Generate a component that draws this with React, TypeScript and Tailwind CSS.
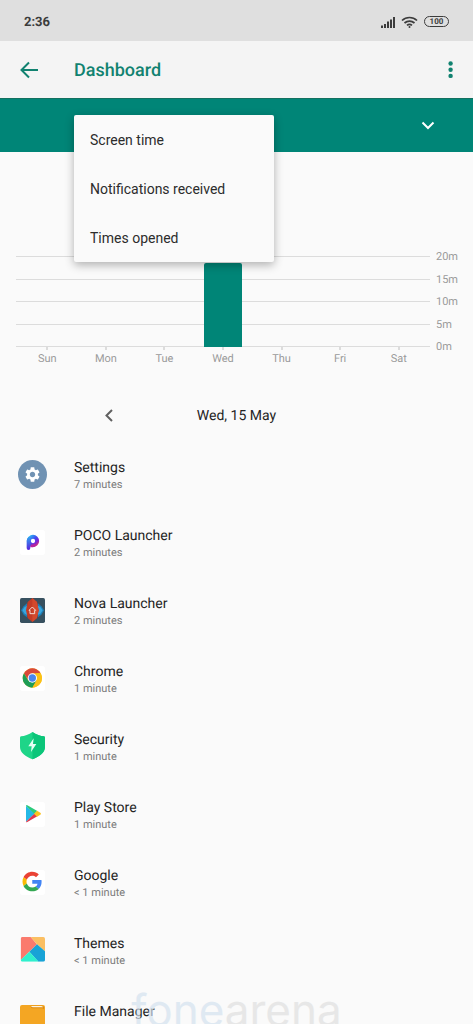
import React from 'react';

interface AppUsage {
  name: string;
  time: string;
  icon: React.ReactNode;
}

const MENU_ITEMS = ['Screen time', 'Notifications received', 'Times opened'];

const Y_LABELS = ['20m', '15m', '10m', '5m', '0m'];

const MAX_MINUTES = 20;

const DAYS = [
  { label: 'Sun', minutes: 0 },
  { label: 'Mon', minutes: 0 },
  { label: 'Tue', minutes: 0 },
  { label: 'Wed', minutes: 18.5 },
  { label: 'Thu', minutes: 0 },
  { label: 'Fri', minutes: 0 },
  { label: 'Sat', minutes: 0 }
];

// All app icons share one 87 unit canvas
const AppIcon: React.FC<{ children: React.ReactNode }> = ({ children }) => (
  <svg viewBox="0 0 87 87" className="size-[29px]" aria-hidden="true">
    {children}
  </svg>
);

const SettingsIcon = () => (
  <AppIcon>
    <circle cx="43.5" cy="43.5" r="43.5" fill="#7092b3" />
    <path
      transform="translate(16.5 16.5) scale(2.25)"
      fill="#fff"
      d="M19.14 12.94c.04-.3.06-.61.06-.94 0-.32-.02-.64-.07-.94l2.03-1.58c.18-.14.23-.41.12-.61l-1.92-3.32c-.12-.22-.37-.29-.59-.22l-2.39.96c-.5-.38-1.03-.7-1.62-.94l-.36-2.54c-.04-.24-.24-.41-.48-.41h-3.84c-.24 0-.43.17-.47.41l-.36 2.54c-.59.24-1.13.57-1.62.94l-2.39-.96c-.22-.08-.47 0-.59.22L2.74 8.87c-.12.21-.08.47.12.61l2.03 1.58c-.05.3-.09.63-.09.94s.02.64.07.94l-2.03 1.58c-.18.14-.23.41-.12.61l1.92 3.32c.12.22.37.29.59.22l2.39-.96c.5.38 1.03.7 1.62.94l.36 2.54c.05.24.24.41.48.41h3.84c.24 0 .44-.17.47-.41l.36-2.54c.59-.24 1.13-.56 1.62-.94l2.39.96c.22.08.47 0 .59-.22l1.92-3.32c.12-.22.07-.47-.12-.61l-2.01-1.58zM12 15.6c-1.98 0-3.6-1.62-3.6-3.6s1.62-3.6 3.6-3.6 3.6 1.62 3.6 3.6-1.62 3.6-3.6 3.6z"
    />
  </AppIcon>
);

const PocoIcon = () => (
  <AppIcon>
    <defs>
      <linearGradient id="poco-bowl" x1="0" y1="0" x2="1" y2="1">
        <stop offset="0" stopColor="#2fb4f2" />
        <stop offset="0.45" stopColor="#3f4df0" />
        <stop offset="0.75" stopColor="#7a24d8" />
        <stop offset="1" stopColor="#d0307c" />
      </linearGradient>
      <linearGradient id="poco-stem" x1="0" y1="0" x2="0" y2="1">
        <stop offset="0" stopColor="#2fa5f2" />
        <stop offset="1" stopColor="#5a22dc" />
      </linearGradient>
    </defs>
    <rect x="6" y="6" width="75" height="75" rx="8" fill="#fff" />
    <circle cx="45" cy="39" r="12.500" fill="none" stroke="url(#poco-bowl)" strokeWidth="12" />
    <path d="M26 38q1-8 6-12l5 10v24q0 6-5.500 6T26 60z" fill="url(#poco-stem)" />
    <path d="M38 53q8 3 15-4" fill="none" stroke="#b8249c" strokeWidth="8" />
  </AppIcon>
);

const NovaIcon = () => (
  <AppIcon>
    <rect x="6" y="6" width="75" height="75" rx="5" fill="#37505f" />
    <path d="M9 43l8-12 10-9v42l-10-8z" fill="#1c7fb8" />
    <path d="M78 43l-8-12-10-9v42l10-8z" fill="#1c7fb8" />
    <path d="M13 43l7-10 8-4v28l-8-4zM74 43l-7-10-8-4v28l8-4z" fill="#3ba6dc" />
    <path d="M43 6l14 12 5 25-5 23-14 12-14-12-5-23 5-25z" fill="#c23c26" />
    <path d="M43 6l14 12 5 25-5 23-14 12z" fill="#d3492c" />
    <path d="M33 43l10-10 10 10h-3v10H36V43z" fill="none" stroke="#f4dcd4" strokeWidth="3" strokeLinejoin="round" />
  </AppIcon>
);

const ChromeIcon = () => (
  <AppIcon>
    <rect x="6" y="6" width="75" height="75" rx="8" fill="#fff" />
    <circle cx="43" cy="42" r="29" fill="#fbc116" />
    <path d="M17.9 27.5A29 29 0 0 1 68.1 27.5H43L31.4 48.7z" fill="#d9493a" />
    <path d="M17.9 27.5A29 29 0 0 0 43 71L55.6 49.3 43 42 31 50z" fill="#1f9d57" />
    <path d="M68.1 27.5A29 29 0 0 1 43 71L55.6 49.3 55 27.5z" fill="#fbc116" />
    <circle cx="43" cy="42" r="14" fill="#fff" />
    <circle cx="43" cy="42" r="11" fill="#4a86ee" />
  </AppIcon>
);

const SecurityIcon = () => (
  <AppIcon>
    <path d="M43.5 0C54 8 68 12 78 13q3 1 3 4v28c0 17-17 29-37.500 37C23 74 6 62 6 45V17q0-3 3-4C19 12 33 8 43.500 0z" fill="#1ed588" />
    <path d="M43.500 0C54 8 68 12 78 13q3 1 3 4v28c0 17-17 29-37.500 37z" fill="#0bc579" />
    <path d="M47 19L31 43h10l-2 17 16-24H45z" fill="#e6fff4" />
  </AppIcon>
);

const PlayIcon = () => (
  <AppIcon>
    <rect x="6" y="6" width="75" height="75" rx="8" fill="#fff" />
    <path d="M24 17v48l26-24z" fill="#26b9e6" />
    <path d="M24 17q1-3 4-1l30 17-9 9z" fill="#2ccb7c" />
    <path d="M24 65q1 3 4 1l30-17-9-8z" fill="#e0394f" />
    <path d="M57 32l10 6q4 3 0 6l-10 6-9-9z" fill="#fcc31e" />
  </AppIcon>
);

const GoogleIcon = () => (
  <AppIcon>
    <rect x="6" y="6" width="75" height="75" rx="8" fill="#fff" />
    <g transform="translate(13.500 11.500) scale(1.22)">
      <path fill="#ea4335" d="M24 9.500c3.540 0 6.710 1.220 9.210 3.600l6.850-6.850C35.900 2.380 30.470 0 24 0 14.620 0 6.510 5.380 2.560 13.220l7.980 6.190C12.430 13.720 17.740 9.500 24 9.500z" />
      <path fill="#4285f4" d="M46.980 24.550c0-1.570-.15-3.090-.38-4.550H24v9.020h12.940c-.58 2.960-2.260 5.480-4.780 7.180l7.730 6c4.510-4.180 7.090-10.360 7.090-17.650z" />
      <path fill="#fbbc05" d="M10.530 28.590c-.48-1.450-.76-2.990-.76-4.590s.27-3.140.76-4.590l-7.980-6.190C.92 16.460 0 20.120 0 24c0 3.880.92 7.540 2.560 10.780l7.970-6.190z" />
      <path fill="#34a853" d="M24 48c6.480 0 11.930-2.130 15.890-5.810l-7.730-6c-2.150 1.450-4.920 2.300-8.160 2.300-6.260 0-11.570-4.220-13.470-9.910l-7.980 6.190C6.510 42.620 14.620 48 24 48z" />
    </g>
  </AppIcon>
);

const ThemesIcon = () => (
  <AppIcon>
    <defs>
      <clipPath id="themes-tile">
        <rect x="8" y="3" width="73" height="74" rx="5" />
      </clipPath>
    </defs>
    <g clipPath="url(#themes-tile)">
      <path d="M8 3h30l19 22-49 48z" fill="#fa7a6d" />
      <path d="M38 3h43v43L57 25z" fill="#fbbf62" />
      <path d="M57 25l24 21v31H61L34 47z" fill="#18a3d6" />
      <path d="M34 47l28 30H8v-5z" fill="#2ff0cd" />
    </g>
  </AppIcon>
);

const FilesIcon = () => (
  <AppIcon>
    <rect x="6" y="3" width="75" height="76" rx="6" fill="#f4a623" />
    <path d="M38 5h34q6 0 6 6v5q-2-3-6-3H44q-5 0-6-8z" fill="#d98a12" />
    <path d="M39 6h30q5 0 6 4H45q-4 0-6-4z" fill="#fff3dc" />
  </AppIcon>
);

const APPS: AppUsage[] = [
  { name: 'Settings', time: '7 minutes', icon: <SettingsIcon /> },
  { name: 'POCO Launcher', time: '2 minutes', icon: <PocoIcon /> },
  { name: 'Nova Launcher', time: '2 minutes', icon: <NovaIcon /> },
  { name: 'Chrome', time: '1 minute', icon: <ChromeIcon /> },
  { name: 'Security', time: '1 minute', icon: <SecurityIcon /> },
  { name: 'Play Store', time: '1 minute', icon: <PlayIcon /> },
  { name: 'Google', time: '< 1 minute', icon: <GoogleIcon /> },
  { name: 'Themes', time: '< 1 minute', icon: <ThemesIcon /> },
  { name: 'File Manager', time: '< 1 minute', icon: <FilesIcon /> }
];

const StatusBar = () => (
  <div className="flex h-[41px] items-center justify-between bg-[#dfdfdf] pt-1 pr-6 pl-6 text-[#3c3c3c]">
    <span className="text-[13px] font-bold">2:36</span>
    <div className="flex items-center gap-1 pb-[2px]">
      <svg viewBox="0 0 17 12" className="h-3 w-[17px]" fill="currentColor" aria-hidden="true">
        <path d="M1 9.500h2V12H1zM4 8h2v4H4zM7 5.500h2V12H7zM10 3.500h2V12h-2zM13 1h2v11h-2z" />
      </svg>
      <svg viewBox="0 0 17 12" className="h-3 w-[17px]" fill="none" stroke="currentColor" strokeWidth="1.700" aria-hidden="true">
        <path d="M1 4.500c4.300-4 10.700-4 15 0M3.500 7c2.900-2.600 7.100-2.600 10 0M6 9.400c1.500-1.300 3.500-1.300 5 0" />
        <circle cx="8.500" cy="11" r="1" fill="currentColor" stroke="none" />
      </svg>
      <span className="ml-[2px] flex h-[11px] w-[25px] items-center justify-center rounded-full border border-[#3c3c3c] text-[8px] leading-none font-bold">
        100
      </span>
    </div>
  </div>
);

const AppBar = () => (
  <header className="flex h-[57px] items-center bg-[#f4f4f4] text-[#118270]">
    <button type="button" aria-label="Back" className="ml-[18px] flex w-14 items-center">
      <svg viewBox="0 0 24 24" className="size-6" fill="none" stroke="currentColor" strokeWidth="2" aria-hidden="true">
        <path d="M20 12H4M11 4.500L3.500 12l7.500 7.500" />
      </svg>
    </button>
    <h1 className="flex-1 pt-[2px] text-[18px] font-medium">Dashboard</h1>
    <button type="button" aria-label="More options" className="mr-[10px] flex size-6 items-center justify-center">
      <svg viewBox="0 0 24 24" className="size-6" fill="currentColor" aria-hidden="true">
        <circle cx="11.600" cy="5.500" r="2.200" />
        <circle cx="11.600" cy="11.700" r="2.200" />
        <circle cx="11.600" cy="17.900" r="2.200" />
      </svg>
    </button>
  </header>
);

const MetricPicker = () => (
  <div className="relative h-[54px] border-t border-[#13705f] bg-[#008577]">
    <button
      type="button"
      aria-label="Choose metric"
      aria-haspopup="menu"
      aria-expanded="true"
      className="flex size-full items-center justify-end pr-[37px] text-white"
    >
      <svg viewBox="0 0 16 16" className="size-4" fill="none" stroke="currentColor" strokeWidth="2" aria-hidden="true">
        <path d="M2.500 4.500L8 10l5.500-5.500" />
      </svg>
    </button>
    <div
      role="menu"
      className="absolute top-4 left-[74px] z-10 w-[200px] rounded-xs bg-[#fafafa] shadow-[0_3px_10px_rgba(0,0,0,0.3)]"
    >
      {MENU_ITEMS.map((item) => (
        <button
          key={item}
          type="button"
          role="menuitem"
          className="flex h-[49px] w-full items-center px-4 text-sm text-[#2c2c2c]"
        >
          {item}
        </button>
      ))}
    </div>
  </div>
);

const UsageChart = () => (
  <section className="pt-[104px] pl-4 text-[11px] text-[#9a9a9a]">
    <div className="flex">
      <div className="grid h-[91px] flex-1">
        <div className="col-start-1 row-start-1 flex flex-col justify-between">
          {Y_LABELS.map((label) => (
            <div key={label} className="h-px bg-[#dcdcdc]" />
          ))}
        </div>
        <div className="col-start-1 row-start-1 grid grid-cols-7 items-end justify-items-center px-[2px]">
          {DAYS.map((day) => (
            <div
              key={day.label}
              className="w-[38px] rounded-t-xs bg-[#008577]"
              style={{ height: `${(day.minutes / MAX_MINUTES) * 100}%` }}
            />
          ))}
        </div>
      </div>
      <div className="-my-[6px] flex w-[43px] flex-col justify-between pl-[6px] leading-[13px]">
        {Y_LABELS.map((label) => (
          <span key={label}>{label}</span>
        ))}
      </div>
    </div>
    <div className="mr-[43px] grid grid-cols-7 px-[2px]">
      {DAYS.map((day) => (
        <div key={day.label} className="flex flex-col items-center gap-[2px]">
          <span className="h-[3px] w-[2px] bg-[#dcdcdc]" />
          <span className="leading-[13px]">{day.label}</span>
        </div>
      ))}
    </div>
  </section>
);

const DateSwitcher = () => (
  <div className="mt-[39px] grid grid-cols-[24px_1fr_24px] items-center px-[97px] pb-3">
    <button type="button" aria-label="Previous day" className="flex size-6 items-center justify-center text-[#606060]">
      <svg viewBox="0 0 16 16" className="size-4" fill="none" stroke="currentColor" strokeWidth="2" aria-hidden="true">
        <path d="M11 2L5.500 7.500 11 13" />
      </svg>
    </button>
    <p className="text-center text-sm text-[#242424]">Wed, 15 May</p>
  </div>
);

export default function App() {
  return (
    <main className="relative h-screen overflow-hidden bg-[#fafafa] font-[Roboto,sans-serif] [text-rendering:geometricPrecision]">
      <StatusBar />
      <AppBar />
      <MetricPicker />
      <UsageChart />
      <DateSwitcher />
      <ul>
        {APPS.map((app) => (
          <li key={app.name} className="flex h-[68px] pt-5 pl-[18px]">
            <div className="w-14">{app.icon}</div>
            <div className="-mt-[2px]">
              <p className="text-sm leading-5 text-[#242424]">{app.name}</p>
              <p className="text-[11px] leading-[13px] text-[#7c7c7c]">{app.time}</p>
            </div>
          </li>
        ))}
      </ul>
      <div
        aria-hidden="true"
        className="pointer-events-none absolute inset-x-0 -bottom-3 text-center font-[Inter,sans-serif] text-[44px] leading-[52px] opacity-70"
      >
        <span className="text-[#d5e2f0]">fone</span>
        <span className="text-[#e0e0e0]">arena</span>
      </div>
    </main>
  );
}
